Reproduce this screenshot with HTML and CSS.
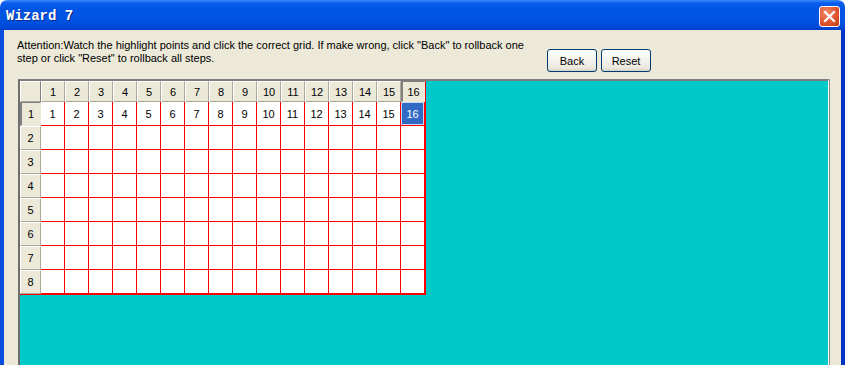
FILE: index.html
```html
<!DOCTYPE html>
<html lang="en">
<head>
  <meta charset="UTF-8">
  <meta name="viewport" content="width=device-width, initial-scale=1.0">
  <title>Wizard 7</title>
  <link rel="stylesheet" href="styles.css">
</head>
<body>

  <div class="window">
    <div class="titlebar">
      <span class="title">Wizard 7</span>
      <button class="close-btn" aria-label="Close">
        <svg width="13" height="13" viewBox="0 0 13 13">
          <path d="M2 2 L11 11 M11 2 L2 11" stroke="#fff" stroke-width="2.2" stroke-linecap="square"/>
        </svg>
      </button>
    </div>

    <div class="window-body">
      <div class="top">
        <p class="note">
          Attention:Watch the highlight points and click the correct grid. If make wrong, click "Back" to rollback one<br>
          step or click "Reset" to rollback all steps.
        </p>
        <div class="actions">
          <button class="btn">Back</button>
          <button class="btn">Reset</button>
        </div>
      </div>

      <div class="board">
        <div class="grid" id="grid"></div>
      </div>
    </div>
  </div>

  <script>
    const COLS = 16;
    const ROWS = 8;
    const grid = document.getElementById('grid');

    // header row
    grid.appendChild(Object.assign(document.createElement('div'), { className: 'head corner' }));
    for (let c = 1; c <= COLS; c++) {
      const h = document.createElement('div');
      h.className = 'head' + (c === COLS ? ' pressed' : '');
      h.textContent = c;
      grid.appendChild(h);
    }

    // body rows
    for (let r = 1; r <= ROWS; r++) {
      const rh = document.createElement('div');
      rh.className = 'head' + (r === 1 ? ' pressed' : '');
      rh.textContent = r;
      grid.appendChild(rh);

      for (let c = 1; c <= COLS; c++) {
        const cell = document.createElement('div');
        cell.className = 'cell';
        if (r === 1) {
          cell.textContent = c;
          if (c === COLS) cell.classList.add('selected');
        }
        grid.appendChild(cell);
      }
    }
  </script>
</body>
</html>
```

FILE: styles.css
```css
* {
  margin: 0;
  padding: 0;
  box-sizing: border-box;
}

body, html {
  height: 100%;
  overflow: hidden;
  background-color: #fff;
  font-family: 'Liberation Sans', Arial, sans-serif;
  font-size: 11px;
  color: #000;
}

.window {
  width: 845px;
  height: 365px;
}

.titlebar {
  height: 30px;
  display: flex;
  justify-content: space-between;
  align-items: center;
  padding: 2px 5px 0 6px;
  background: linear-gradient(#3d8dff 0, #0a5cec 3px, #0055e5 9px, #0053e3 20px, #0049d6 27px, #003fc8 30px);
  border-radius: 7px 7px 0 0;
}

.title {
  font-family: 'Liberation Mono', 'DejaVu Sans Mono', monospace;
  font-weight: bold;
  font-size: 14px;
  color: #fff;
  text-shadow: 1px 1px 0 #0a2a8a;
}

.close-btn {
  width: 21px;
  height: 21px;
  border: 1px solid #fff;
  border-radius: 3px;
  background: radial-gradient(circle at 35% 30%, #f08a6a 0, #e0552f 55%, #c43c17 100%);
  display: flex;
  justify-content: center;
  align-items: center;
}

.window-body {
  height: 335px;
  background-color: #ece9d8;
  border-left: 4px solid #0a4ee0;
  border-right: 4px solid #0034c4;
}

.top {
  height: 49px;
  display: flex;
  padding: 9px 0 0 13px;
}

.note {
  width: 530px;
  line-height: 13px;
}

.actions {
  display: flex;
  gap: 4px;
  padding-top: 10px;
}

.btn {
  width: 50px;
  height: 23px;
  font-family: 'Liberation Sans', Arial, sans-serif;
  font-size: 11px;
  color: #000;
  border: 1px solid #003c74;
  border-radius: 3px;
  background: linear-gradient(#ffffff 0, #f6f5f0 40%, #ebe8df 85%, #d7d2c6 100%);
}

.board {
  margin-left: 14px;
  width: 811px;
  height: 300px;
  background-color: #00c9c9;
  border-style: solid;
  border-width: 2px 1px 0 2px;
  border-color: #7d7d7d #fff #fff #6f6f6f;
  box-shadow: 1px 0 0 #8a8a8a;
}

.grid {
  display: grid;
  grid-template-columns: 21px repeat(16, 24px);
  grid-template-rows: 21px repeat(8, 24px);
  width: max-content;
  border-right: 1px solid #ff0000;
  border-bottom: 1px solid #ff0000;
}

.head {
  background-color: #ece9d8;
  border-top: 1px solid #fff;
  border-left: 1px solid #fff;
  border-right: 1px solid #aca899;
  border-bottom: 1px solid #aca899;
  display: flex;
  justify-content: center;
  align-items: center;
}

.head.pressed {
  border-top: 1px solid #808080;
  border-left: 2px solid #808080;
  border-right: 1px solid #ece9d8;
  border-bottom: 1px solid #ece9d8;
}

.head.corner {
  border-right-color: #808080;
}

.cell {
  background-color: #fff;
  border-right: 1px solid #ff0000;
  border-bottom: 1px solid #ff0000;
  display: flex;
  justify-content: center;
  align-items: center;
}

.cell.selected {
  background-color: #316ac5;
  color: #fff;
  box-shadow: inset 0 0 0 1px #c9d9f2;
}
```
